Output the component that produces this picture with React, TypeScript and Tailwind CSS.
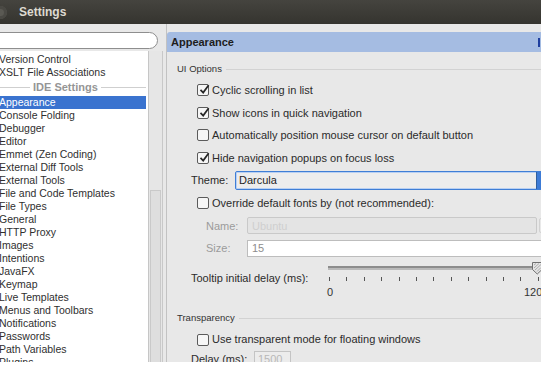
import type { ReactNode } from "react";

const projectItems = ["Version Control", "XSLT File Associations"];

const ideItems = [
  "Appearance",
  "Console Folding",
  "Debugger",
  "Editor",
  "Emmet (Zen Coding)",
  "External Diff Tools",
  "External Tools",
  "File and Code Templates",
  "File Types",
  "General",
  "HTTP Proxy",
  "Images",
  "Intentions",
  "JavaFX",
  "Keymap",
  "Live Templates",
  "Menus and Toolbars",
  "Notifications",
  "Passwords",
  "Path Variables",
  "Plugins",
];

function Check({ checked }: { checked?: boolean }) {
  return (
    <span className="relative flex h-[12px] w-[12px] shrink-0 items-center justify-center rounded-[2px] border border-[#5b5b5b] bg-[#f6f6f6]">
      {checked ? (
        <svg className="absolute left-[1px] top-[-1px]" width="11" height="11" viewBox="0 0 11 11">
          <path d="M1.5 5.8 L4.2 8.6 L9.6 1.2" stroke="#262626" strokeWidth="1.7" fill="none" />
        </svg>
      ) : null}
    </span>
  );
}

function CheckRow({ label, checked }: { label: string; checked?: boolean }) {
  return (
    <div className="flex h-[22.6px] shrink-0 items-center gap-[3px] pl-[30px]">
      <Check checked={checked} />
      <span>{label}</span>
    </div>
  );
}

function GroupTitle({ children, className }: { children: ReactNode; className?: string }) {
  return (
    <div className={`flex h-[12px] shrink-0 items-center pl-[10px] ${className ?? ""}`}>
      <span className="text-[9.5px] text-[#333]">{children}</span>
      <span className="ml-[4px] h-px flex-1 bg-[#d2d2d2]" />
    </div>
  );
}

function Slider() {
  const ticks = Array.from({ length: 13 }, (_, i) => i);
  return (
    <div className="relative h-full w-[214px]">
      <div className="absolute left-0 right-0 top-[6px] h-[4px] border-t-2 border-[#8c8c8c] bg-[#b9b9b9]" />
      <div className="absolute left-[1px] top-[17px] flex w-[210px] justify-between">
        {ticks.map((t) => (
          <span key={t} className="h-[4px] w-px bg-[#555]" />
        ))}
      </div>
      <span className="absolute left-[-1px] top-[24px] text-[#333]">0</span>
      <span className="absolute left-[196px] top-[24px] text-[#333]">1200</span>
      <svg className="absolute left-[204px] top-[2px]" width="11" height="13" viewBox="0 0 11 13">
        <path d="M0.5 0.5 H10 V7.5 L5.25 12 L0.5 7.5 Z" fill="#e4e4e4" stroke="#6f6f6f" />
        <path d="M2 3 L4 1.5 M2 6 L7 1.5 M3 8 L9 2.5 M5 9.5 L9 5.5" stroke="#9a9a9a" strokeWidth="0.8" />
      </svg>
    </div>
  );
}

function LeftPane() {
  return (
    <div className="flex w-[166px] shrink-0 flex-col pt-[8px]">
      <div className="-ml-[11px] h-[17px] w-[169px] shrink-0 rounded-full border border-[#8e8e8e] bg-white" />
      <div className="mt-[2px] flex min-h-0 flex-1">
        <div className="w-[149px] overflow-hidden border-r border-[#c6c6c6] bg-white pt-[2px] text-[10.5px] text-[#2f2f2f]">
          {projectItems.map((item) => (
            <div key={item} className="-ml-px h-[13px] whitespace-nowrap leading-[13px]">
              {item}
            </div>
          ))}
          <div className="flex h-[17px] items-center gap-[3px] pr-[2px]">
            <span className="h-px w-[30px] bg-[#cfcfcf]" />
            <span className="text-[11px] font-bold text-[#959595]">IDE Settings</span>
            <span className="h-px flex-1 bg-[#cfcfcf]" />
          </div>
          {ideItems.map((item) => (
            <div
              key={item}
              className={`h-[13px] whitespace-nowrap leading-[13px] ${
                item === "Appearance" ? "mr-[2px] bg-[#3a73cf] text-white" : ""
              }`}
            >
              <span className="-ml-px">{item}</span>
            </div>
          ))}
        </div>
        <div className="flex w-[14px] flex-col border-r border-[#c8c8c8] bg-[#e6e6e6]">
          <div className="h-[139px] shrink-0" />
          <div className="mx-[1px] flex-1 border-x border-t border-[#c9c9c9] bg-[#dedede]" />
        </div>
      </div>
    </div>
  );
}

function RightPane() {
  return (
    <div className="flex min-w-0 flex-1 flex-col overflow-hidden border-l border-[#c2c2c2] pt-[8px] text-[#2b2b2b]">
      <div className="flex h-[20px] shrink-0 items-center justify-between rounded-tl-[3px] bg-[#a5bce2] pl-[4px]">
        <span className="font-bold text-[#1d1d1d]">Appearance</span>
        <span className="mr-[1px] h-[9px] w-[2px] bg-[#1f3f9f]" />
      </div>

      <GroupTitle className="mt-[11px]">UI Options</GroupTitle>
      <div className="h-[4px] shrink-0" />
      <CheckRow checked label="Cyclic scrolling in list" />
      <CheckRow checked label="Show icons in quick navigation" />
      <CheckRow label="Automatically position mouse cursor on default button" />
      <CheckRow checked label="Hide navigation popups on focus loss" />

      <div className="flex h-[22.6px] shrink-0 items-center pl-[24px]">
        <span className="w-[44px] shrink-0">Theme:</span>
        <div className="flex h-[19px] w-[320px] shrink-0 items-stretch rounded-[2px] border border-[#3f7ed6] bg-[#ededed] shadow-[inset_0_0_0_1px_#b9d0f2]">
          <span className="flex flex-1 items-center pl-[3px] text-[#1f1f1f]">Darcula</span>
          <span className="flex w-[18px] items-center justify-center border-l border-[#2f5f9f] bg-[#3d7bd6] text-[8px] text-white">
            ▾
          </span>
        </div>
      </div>

      <CheckRow label="Override default fonts by (not recommended):" />

      <div className="flex h-[22.6px] shrink-0 items-center pl-[39px]">
        <span className="w-[41px] shrink-0 text-[#9b9b9b]">Name:</span>
        <div className="flex h-[17px] w-[290px] shrink-0 items-center rounded-[2px] border border-[#c9c9c9] bg-[#e4e4e4] pl-[4px] text-[#cfcfcf]">
          Ubuntu
        </div>
        <span className="ml-[2px] h-[15px] w-[6px] shrink-0 rounded-l-[2px] border border-[#d2d2d2] bg-[#e9e9e9]" />
      </div>

      <div className="flex h-[22.6px] shrink-0 items-center pl-[39px]">
        <span className="w-[41px] shrink-0 text-[#9b9b9b]">Size:</span>
        <div className="flex h-[17px] w-[300px] shrink-0 items-center border border-[#bdbdbd] bg-white pl-[4px] text-[#8d8d8d]">
          15
        </div>
      </div>

      <div className="flex h-[37.5px] shrink-0 items-center pl-[24px]">
        <span className="w-[137px] shrink-0">Tooltip initial delay (ms):</span>
        <Slider />
      </div>

      <GroupTitle className="mt-[15px]">Transparency</GroupTitle>
      <div className="h-[4px] shrink-0" />
      <CheckRow label="Use transparent mode for floating windows" />

      <div className="flex h-[16px] shrink-0 items-center pl-[24px]">
        <span className="w-[63px] shrink-0">Delay (ms):</span>
        <div className="flex h-[16px] w-[37px] items-center border border-[#c4c4c4] bg-[#ececec] pl-[3px] text-[#b8b8b8]">
          1500
        </div>
      </div>
    </div>
  );
}

export default function App() {
  return (
    <div className="h-[374px] w-[546px] overflow-hidden bg-white font-['Liberation_Sans',Arial,sans-serif] text-[11px]">
      <div className="flex h-[362px] w-[541px] flex-col overflow-hidden bg-[#e8e8e8]">
        <div className="flex h-[24px] shrink-0 items-center bg-gradient-to-b from-[#45443f] to-[#35342f]">
          <span className="-ml-[6px] h-[13px] w-[13px] rounded-full bg-[#5a5953] shadow-[inset_0_0_0_3px_#4a4944]" />
          <span className="ml-[12px] text-[12px] font-bold text-[#dedad1]">Settings</span>
        </div>
        <div className="flex min-h-0 flex-1">
          <LeftPane />
          <RightPane />
        </div>
      </div>
    </div>
  );
}
